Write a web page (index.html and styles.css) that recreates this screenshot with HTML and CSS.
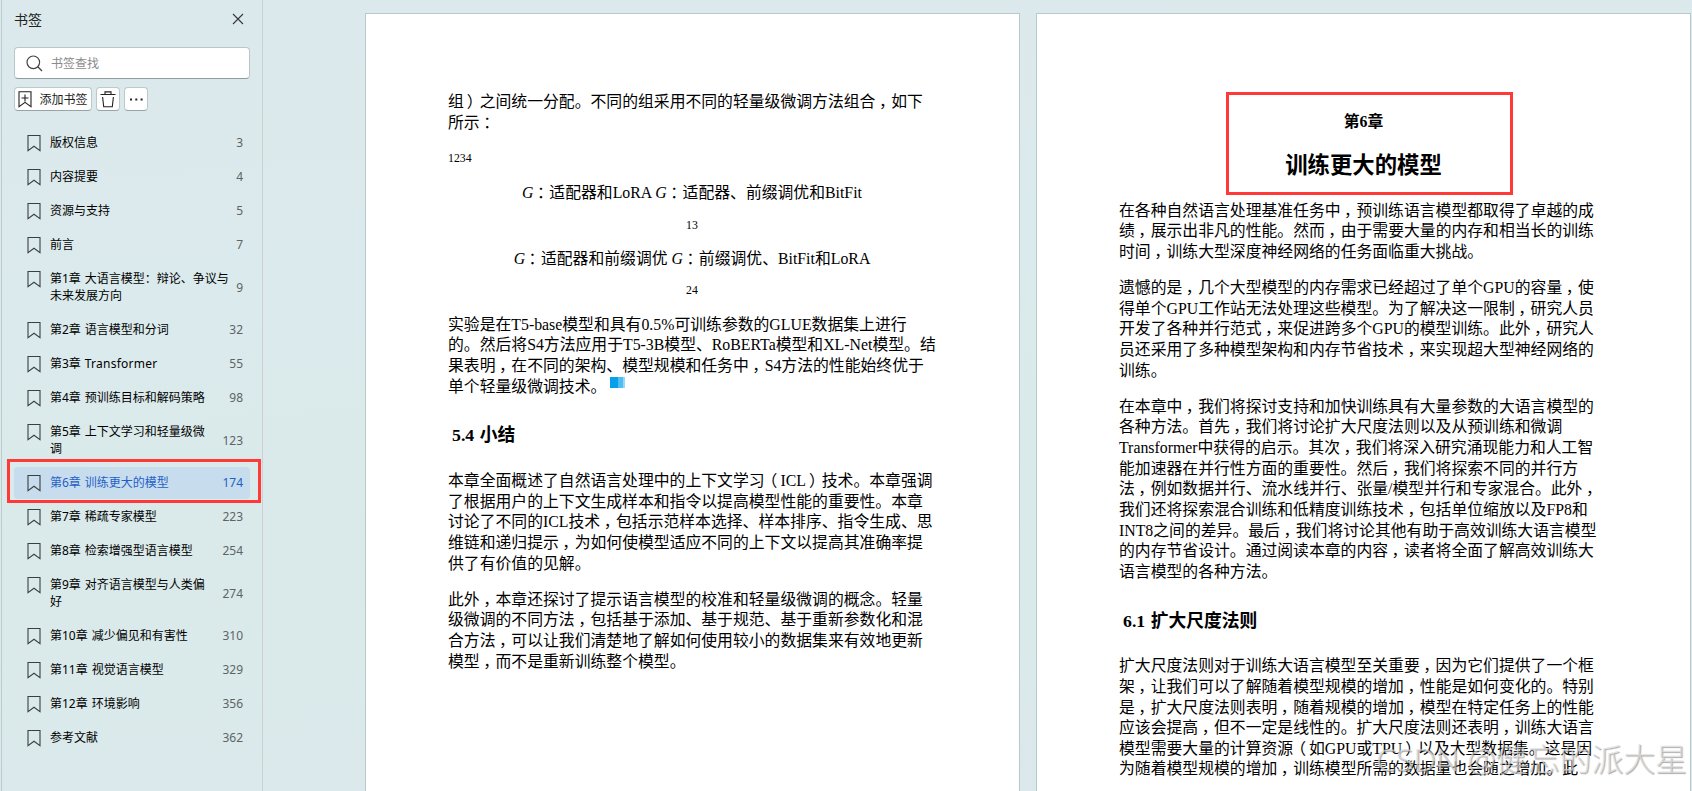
FILE: index.html
```html
<!DOCTYPE html>
<html lang="zh-CN">
<head>
<meta charset="utf-8">
<title>书签</title>
<link rel="stylesheet" href="styles.css">
</head>
<body>
<svg class="defs" width="0" height="0">
  <symbol id="mark" viewBox="0 0 14 17"><path d="M1 .5H13V15.6L7 11.2 1 15.6Z" fill="none" stroke="#3a3f41" stroke-width="1.1"/></symbol>
</svg>
<div class="app">
  <aside class="sidebar">
    <header class="head"><span>书签</span>
      <svg width="12" height="12" viewBox="0 0 12 12"><path d="M1 1L11 11M11 1L1 11" stroke="#33383a" stroke-width="1.1"/></svg>
    </header>
    <div class="search">
      <svg width="17" height="17" viewBox="0 0 17 17"><circle cx="7.3" cy="7.3" r="6.3" fill="none" stroke="#444" stroke-width="1.2"/><path d="M11.8 11.8L16 16" stroke="#444" stroke-width="1.3"/></svg>
      <span>书签查找</span>
    </div>
    <div class="tools">
      <div class="btn add"><svg width="14" height="17" viewBox="0 0 14 17"><path d="M1 .7H13V15.6L7 11.4 1 15.6ZM7 3.5V10.5M3.5 7H10.5" fill="none" stroke="#222" stroke-width="1.1"/></svg><span>添加书签</span></div>
      <div class="btn sq"><svg width="16" height="17" viewBox="0 0 16 17"><path d="M.5 3.5H15.5M5 3.5V.9H11V3.5M2.6 6L3.7 15.7H12.3L13.4 6" fill="none" stroke="#222" stroke-width="1.1"/></svg></div>
      <div class="btn sq"><svg width="13" height="3" viewBox="0 0 13 3"><path d="M0 .5h2v2H0zM5.3 .5h2v2h-2zM10.6 .5h2v2h-2z" fill="#222"/></svg></div>
    </div>
    <ul class="list">
      <li><svg class="ic"><use href="#mark"/></svg><span class="t">版权信息</span><span class="n">3</span></li>
      <li><svg class="ic"><use href="#mark"/></svg><span class="t">内容提要</span><span class="n">4</span></li>
      <li><svg class="ic"><use href="#mark"/></svg><span class="t">资源与支持</span><span class="n">5</span></li>
      <li><svg class="ic"><use href="#mark"/></svg><span class="t">前言</span><span class="n">7</span></li>
      <li><svg class="ic"><use href="#mark"/></svg><span class="t">第1章 大语言模型：辩论、争议与<br>未来发展方向</span><span class="n">9</span></li>
      <li><svg class="ic"><use href="#mark"/></svg><span class="t">第2章 语言模型和分词</span><span class="n">32</span></li>
      <li><svg class="ic"><use href="#mark"/></svg><span class="t">第3章 <span class="latin">Transformer</span></span><span class="n">55</span></li>
      <li><svg class="ic"><use href="#mark"/></svg><span class="t">第4章 预训练目标和解码策略</span><span class="n">98</span></li>
      <li><svg class="ic"><use href="#mark"/></svg><span class="t">第5章 上下文学习和轻量级微<br>调</span><span class="n">123</span></li>
      <li class="on"><svg class="ic"><use href="#mark"/></svg><span class="t">第6章 训练更大的模型</span><span class="n">174</span></li>
      <li><svg class="ic"><use href="#mark"/></svg><span class="t">第7章 稀疏专家模型</span><span class="n">223</span></li>
      <li><svg class="ic"><use href="#mark"/></svg><span class="t">第8章 检索增强型语言模型</span><span class="n">254</span></li>
      <li><svg class="ic"><use href="#mark"/></svg><span class="t">第9章 对齐语言模型与人类偏<br>好</span><span class="n">274</span></li>
      <li><svg class="ic"><use href="#mark"/></svg><span class="t">第10章 减少偏见和有害性</span><span class="n">310</span></li>
      <li><svg class="ic"><use href="#mark"/></svg><span class="t">第11章 视觉语言模型</span><span class="n">329</span></li>
      <li><svg class="ic"><use href="#mark"/></svg><span class="t">第12章 环境影响</span><span class="n">356</span></li>
      <li><svg class="ic"><use href="#mark"/></svg><span class="t">参考文献</span><span class="n">362</span></li>
    </ul>
  </aside>
  <main class="pages">
    <article class="page first">
      <p class="lead">组<b>）</b>之间统一分配。不同的组采用不同的轻量级微调方法组合<i>，</i>如下<br>所示<i>：</i></p>
      <p class="small left">1234</p>
      <p class="mid m1"><em>G</em><i>：</i>适配器和LoRA <em>G</em><i>：</i>适配器、前缀调优和BitFit</p>
      <p class="small s1">13</p>
      <p class="mid m2"><em>G</em><i>：</i>适配器和前缀调优 <em>G</em><i>：</i>前缀调优、BitFit和LoRA</p>
      <p class="small s2">24</p>
      <p>实验是在T5-base模型和具有0.5%可训练参数的GLUE数据集上进行<br>的。然后将S4方法应用于T5-3B模型、RoBERTa模型和XL-Net模型。结<br>果表明<i>，</i>在不同的架构、模型规模和任务中<i>，</i>S4方法的性能始终优于<br>单个轻量级微调技术。<span class="chip"></span></p>
      <h3>5.4 小结</h3>
      <p>本章全面概述了自然语言处理中的上下文学习<u>（</u>ICL<b>）</b>技术。本章强调<br>了根据用户的上下文生成样本和指令以提高模型性能的重要性。本章<br>讨论了不同的ICL技术<i>，</i>包括示范样本选择、样本排序、指令生成、思<br>维链和递归提示<i>，</i>为如何使模型适应不同的上下文以提高其准确率提<br>供了有价值的见解。</p>
      <p>此外<i>，</i>本章还探讨了提示语言模型的校准和轻量级微调的概念。轻量<br>级微调的不同方法<i>，</i>包括基于添加、基于规范、基于重新参数化和混<br>合方法<i>，</i>可以让我们清楚地了解如何使用较小的数据集来有效地更新<br>模型<i>，</i>而不是重新训练整个模型。</p>
    </article>
    <article class="page second">
      <h4>第6章</h4>
      <h2>训练更大的模型</h2>
      <p>在各种自然语言处理基准任务中<i>，</i>预训练语言模型都取得了卓越的成<br>绩<i>，</i>展示出非凡的性能。然而<i>，</i>由于需要大量的内存和相当长的训练<br>时间<i>，</i>训练大型深度神经网络的任务面临重大挑战。</p>
      <p>遗憾的是<i>，</i>几个大型模型的内存需求已经超过了单个GPU的容量<i>，</i>使<br>得单个GPU工作站无法处理这些模型。为了解决这一限制<i>，</i>研究人员<br>开发了各种并行范式<i>，</i>来促进跨多个GPU的模型训练。此外<i>，</i>研究人<br>员还采用了多种模型架构和内存节省技术<i>，</i>来实现超大型神经网络的<br>训练。</p>
      <p>在本章中<i>，</i>我们将探讨支持和加快训练具有大量参数的大语言模型的<br>各种方法。首先<i>，</i>我们将讨论扩大尺度法则以及从预训练和微调<br>Transformer中获得的启示。其次<i>，</i>我们将深入研究涌现能力和人工智<br>能加速器在并行性方面的重要性。然后<i>，</i>我们将探索不同的并行方<br>法<i>，</i>例如数据并行、流水线并行、张量/模型并行和专家混合。此外<i>，</i><br>我们还将探索混合训练和低精度训练技术<i>，</i>包括单位缩放以及FP8和<br>INT8之间的差异。最后<i>，</i>我们将讨论其他有助于高效训练大语言模型<br>的内存节省设计。通过阅读本章的内容<i>，</i>读者将全面了解高效训练大<br>语言模型的各种方法。</p>
      <h3>6.1 扩大尺度法则</h3>
      <p>扩大尺度法则对于训练大语言模型至关重要<i>，</i>因为它们提供了一个框<br>架<i>，</i>让我们可以了解随着模型规模的增加<i>，</i>性能是如何变化的。特别<br>是<i>，</i>扩大尺度法则表明<i>，</i>随着规模的增加<i>，</i>模型在特定任务上的性能<br>应该会提高<i>，</i>但不一定是线性的。扩大尺度法则还表明<i>，</i>训练大语言<br>模型需要大量的计算资源<u>（</u>如GPU或TPU<b>）</b>以及大型数据集。这是因<br>为随着模型规模的增加<i>，</i>训练模型所需的数据量也会随之增加。此</p>
    </article>
  </main>
</div>
<div class="frame frame-side"></div>
<div class="frame frame-title"></div>
<div class="stamp">CSDN @健忘的派大星</div>
</body>
</html>
```
FILE: styles.css
```css
* { box-sizing: border-box; margin: 0; padding: 0; }
html, body { width: 1692px; height: 791px; overflow: hidden; }
body { position: relative; background: linear-gradient(175deg, #dce9ec 0%, #dbeaec 35%, #daeaea 62%, #dbe8ec 100%); font-family: "Noto Sans", "Noto Sans CJK SC", sans-serif; text-spacing-trim: space-all; }
.defs { position: absolute; }
.app { display: flex; height: 791px; }

.sidebar { width: 262px; margin-left: 1px; flex: none; border-left: 1px solid #bccbce; border-right: 1px solid #cbd1d3; padding: 0 12px; }
.head { display: flex; justify-content: space-between; align-items: center; height: 38px; padding-right: 6px; font-size: 14px; color: #222; }
.search { display: flex; align-items: center; gap: 8px; height: 32px; margin-top: 9px; padding-left: 11px; background: #fff; border: 1px solid #bac6c9; border-bottom-color: #8f9b9f; border-radius: 4px; font-size: 12px; color: #8a8a8a; }
.tools { display: flex; gap: 4px; margin-top: 8px; }
.btn { display: flex; align-items: center; justify-content: center; height: 24px; background: #fff; border: 1px solid #bdc8cb; border-bottom-color: #98a3a6; border-radius: 4px; font-size: 12px; color: #1c1c1c; }
.add { width: 78px; gap: 7px; }
.sq { width: 24px; }
.list { list-style: none; margin-top: 15px; }
.list li { display: flex; padding: 8px 7px 9px 12px; font-size: 12px; line-height: 17px; color: #000; white-space: nowrap; border-radius: 4px; word-spacing: .8px; }
.ic { flex: none; width: 14px; height: 17px; margin: 1px 9.5px -1px .5px; }
.t { flex: 1; }
.latin { letter-spacing: .25px; }
.n { align-self: center; color: #5d6466; }
.list .on { margin: 1px 0; padding-top: 7px; padding-bottom: 8px; background: #c7dcec; color: #1f5fc8; }
.on .n { color: #1f5fc8; }

.pages { display: flex; gap: 16px; padding: 13px 0 0 102px; }
.page { width: 655px; height: 790px; flex: none; background: #fff; border: 1px solid #b7c9cb; padding-left: 82px; color: #000; font-family: "Liberation Serif", "Noto Sans CJK SC", serif; font-size: 15.83px; line-height: 20.65px; white-space: nowrap; }
.first { padding-top: 78px; }
.second { padding-top: 98px; }
.page p { margin-bottom: 15.4px; }
.page .lead { margin-bottom: 17.4px; }
.page i, .page u, .page b { font-style: normal; font-weight: normal; text-decoration: none; }
.page i { margin: 0 -3.5px 0 3.5px; }
.page b { margin: 0 -3px 0 3px; }
.page u { margin: 0 3px 0 -3px; }
.page .small { width: 488px; height: 14px; margin-bottom: 17px; font-size: 11.8px; line-height: 14px; text-align: center; }
.page .left { margin-bottom: 18px; text-align: left; }
.page .mid { width: 488px; text-align: center; margin-bottom: 15px; }
.page .m2 { margin-bottom: 13px; }
.page .s2 { margin-bottom: 17.7px; }
.chip { display: inline-block; width: 15px; height: 11px; margin-left: 4px; vertical-align: 4px; background: linear-gradient(90deg, #06a0ea 0 8px, #4fbdf0 8px 13px, #97d8f6 13px); }
h3 { padding-left: 4px; margin: 28px 0 25px; font-size: 17.75px; line-height: 20.65px; word-spacing: 1.2px; }
h4 { width: 489px; text-align: center; font-size: 15.83px; line-height: 20px; }
h2 { width: 489px; text-align: center; margin: 21px 0 21.6px; font-size: 22.4px; line-height: 26px; }

.frame { position: absolute; border: 3px solid #ff3838; }
.frame-side { left: 7px; top: 459px; width: 254px; height: 44px; }
.frame-title { left: 1226px; top: 92px; width: 287px; height: 103px; }
.stamp { position: absolute; right: 5px; top: 737px; font-family: "Noto Sans", "Noto Sans CJK SC", sans-serif; font-size: 32px; font-weight: 300; letter-spacing: -.1px; line-height: 44px; white-space: nowrap; color: rgba(222, 222, 222, .7); text-shadow: 1px 1px 1px rgba(100, 100, 100, .55); }
```
